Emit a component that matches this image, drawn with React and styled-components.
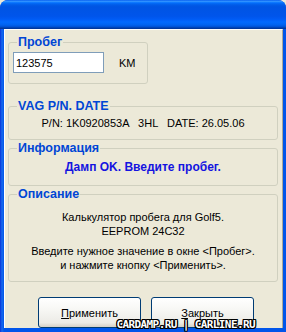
import React from "react";
import styled, { createGlobalStyle } from "styled-components";

const GlobalStyle = createGlobalStyle`
  html, body {
    margin: 0;
    padding: 0;
    background: #ece9d8;
  }
  * {
    box-sizing: border-box;
  }
`;

const Window = styled.div`
  position: relative;
  width: 286px;
  height: 332px;
  display: flex;
  flex-direction: column;
  font-family: Tahoma, "Liberation Sans", Arial, sans-serif;
  font-size: 11px;
  color: #000;
  background: #0a4ad8;
  border-radius: 8px 8px 0 0;
  overflow: hidden;
`;

const TitleBar = styled.div`
  height: 29px;
  flex: none;
  background: linear-gradient(
    to bottom,
    #0058ee 0%,
    #3593ff 4%,
    #288eff 6%,
    #127dff 8%,
    #036ffc 10%,
    #0262ee 14%,
    #0057e5 20%,
    #0054e3 24%,
    #0055eb 56%,
    #005bf5 66%,
    #026afe 76%,
    #0062ef 86%,
    #0052d6 92%,
    #0040ab 96%,
    #003092 100%
  );
`;

const Frame = styled.div`
  flex: 1;
  display: flex;
  padding: 0 4px 4px 4px;
  background: linear-gradient(to right, #0831d9 0, #166aee 2px, #0055ea 4px);
`;

const Body = styled.div`
  flex: 1;
  display: flex;
  flex-direction: column;
  background: #ece9d8;
  border-top: 1px solid #fff;
  border-left: 1px solid #fff;
  border-right: 1px solid #aca899;
  padding: 5px 4px 0 3px;
`;

const Group = styled.fieldset`
  margin: 0 0 ${(p) => p.$gap || 0}px 0;
  width: ${(p) => p.$width || 270}px;
  height: ${(p) => p.$height}px;
  border: 1px solid #d0d0bf;
  border-radius: 3px;
  padding: 0 8px;
  min-width: 0;
`;

const Legend = styled.legend`
  font-family: "Liberation Sans", Arial, sans-serif;
  font-weight: bold;
  font-size: 12.5px;
  line-height: 14px;
  color: #0046d5;
  padding: 0 1px;
  margin-left: 0;
`;

const MileageRow = styled.div`
  display: flex;
  align-items: center;
  margin-top: 3px;
  margin-left: -4px;
`;

const Input = styled.input`
  width: 91px;
  height: 21px;
  border: 1px solid #7f9db9;
  background: #fff;
  padding: 1px 2px 0;
  font-family: "Liberation Sans", Arial, sans-serif;
  font-size: 11px;
  color: #000;
  outline: none;
`;

const Unit = styled.span`
  margin-left: 15px;
  font-family: "Liberation Sans", Arial, sans-serif;
  font-size: 11px;
`;

const Line = styled.div`
  text-align: center;
  white-space: pre;
  font-family: "Liberation Sans", Arial, sans-serif;
  font-size: 11px;
  line-height: 14px;
  margin-top: ${(p) => p.$top || 0}px;
`;

const InfoLine = styled(Line)`
  font-weight: bold;
  font-size: 12px;
  color: #1414e0;
`;

const ButtonRow = styled.div`
  display: flex;
  gap: 10px;
  padding-left: 30px;
  margin-top: 15px;
`;

const Button = styled.button`
  width: 103px;
  height: 31px;
  border: 1px solid #003c74;
  border-radius: 3px;
  background: linear-gradient(to bottom, #ffffff 0%, #f7f7f4 40%, #ecebe6 85%, #d6d0c5 100%);
  font-family: "Liberation Sans", Arial, sans-serif;
  font-size: 11px;
  color: #000;
  padding: 0;

  u {
    text-decoration: underline;
  }
`;

const Watermark = styled.div`
  position: absolute;
  right: 31px;
  bottom: 2px;
  font-family: "DejaVu Sans Mono", monospace;
  font-weight: bold;
  font-size: 11px;
  line-height: 11px;
  letter-spacing: -0.6px;
  color: #fff;
  text-shadow:
    1px 0 0 #000,
    -1px 0 0 #000,
    0 1px 0 #000,
    0 -1px 0 #000,
    1px 1px 0 #000,
    -1px -1px 0 #000,
    1px -1px 0 #000,
    -1px 1px 0 #000;
`;

export default function App() {
  return (
    <>
      <GlobalStyle />
      <Window>
        <TitleBar />
        <Frame>
          <Body>
            <Group $width={140} $height={49} $gap={15}>
              <Legend>Пробег</Legend>
              <MileageRow>
                <Input defaultValue="123575" />
                <Unit>KM</Unit>
              </MileageRow>
            </Group>
            <Group $height={41} $gap={1}>
              <Legend>VAG P/N. DATE</Legend>
              <Line $top={3}>{"P/N: 1K0920853A   3HL   DATE: 26.05.06"}</Line>
            </Group>
            <Group $height={45} $gap={1}>
              <Legend>Информация</Legend>
              <InfoLine $top={5}>Дамп OK. Введите пробег.</InfoLine>
            </Group>
            <Group $height={95}>
              <Legend>Описание</Legend>
              <Line $top={9}>Калькулятор пробега для Golf5.</Line>
              <Line>EEPROM 24C32</Line>
              <Line $top={6}>Введите нужное значение в окне &lt;Пробег&gt;.</Line>
              <Line>и нажмите кнопку &lt;Применить&gt;.</Line>
            </Group>
            <ButtonRow>
              <Button>
                <u>П</u>рименить
              </Button>
              <Button>
                <u>З</u>акрыть
              </Button>
            </ButtonRow>
          </Body>
        </Frame>
        <Watermark>CARDAMP.RU | CARLINE.RU</Watermark>
      </Window>
    </>
  );
}
